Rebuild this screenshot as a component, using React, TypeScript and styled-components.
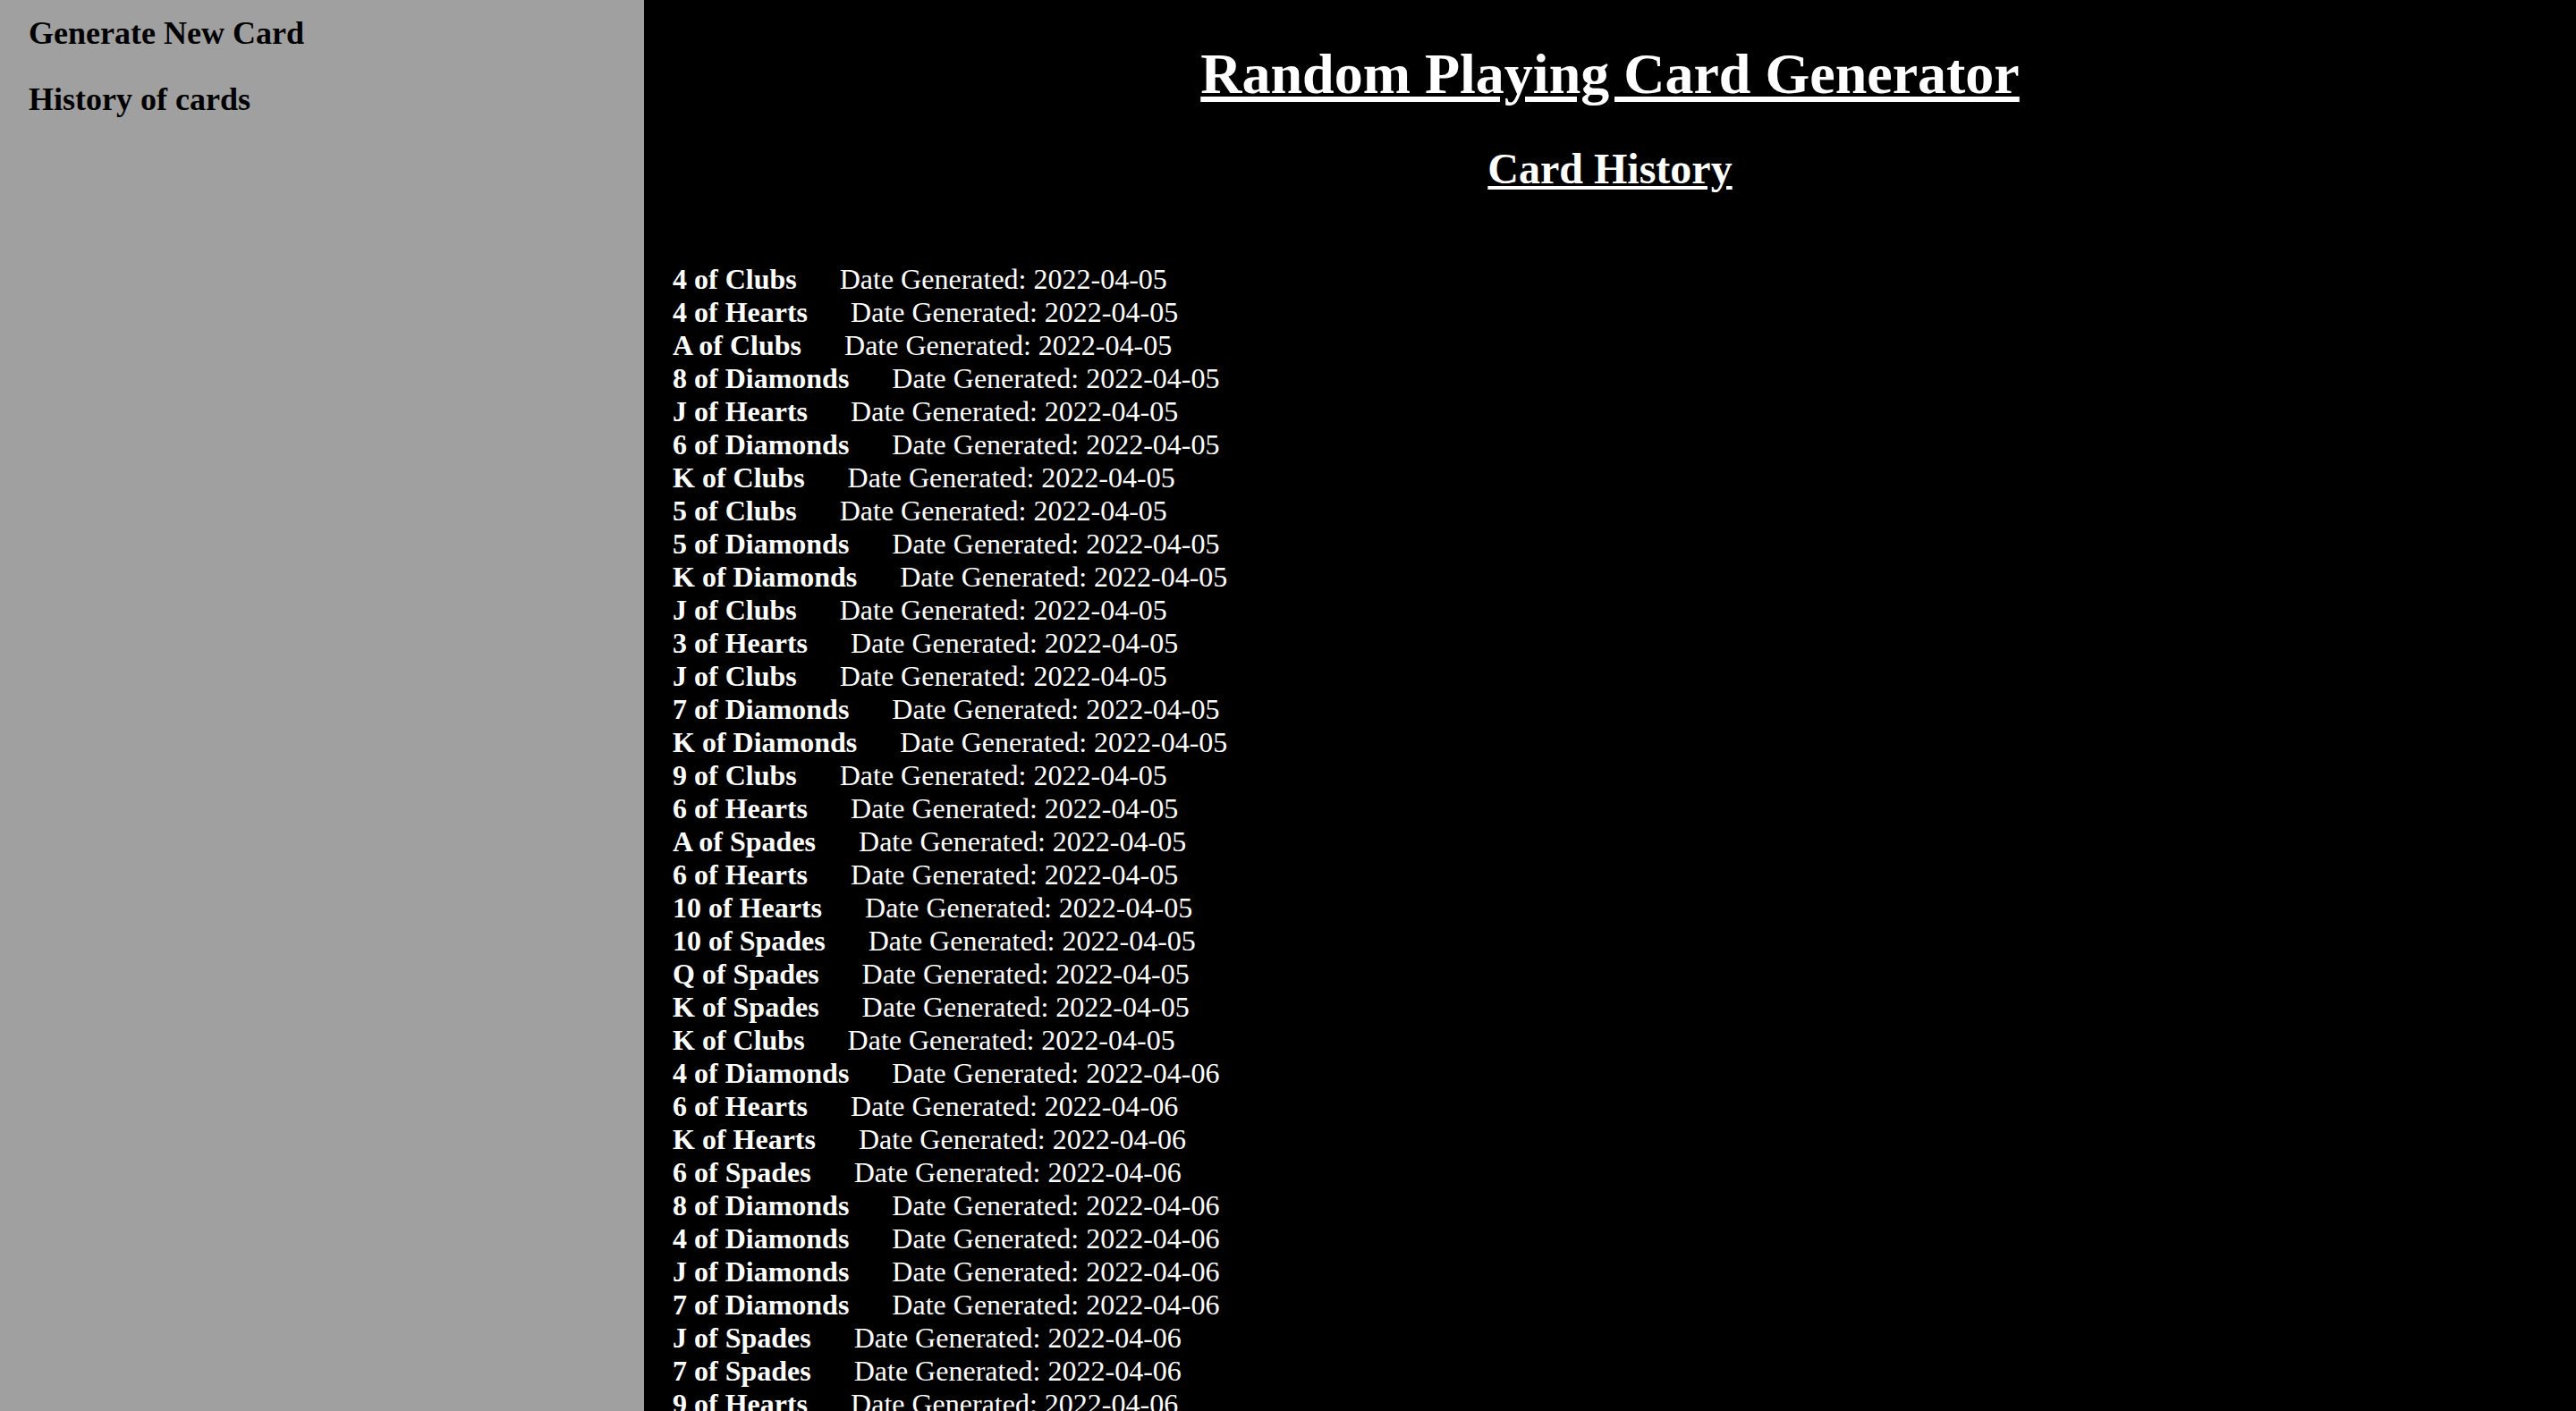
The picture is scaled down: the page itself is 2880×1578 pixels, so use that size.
import React, { FunctionComponent } from 'react';
import styled, { createGlobalStyle } from 'styled-components';

type HistoryEntry = { card: string; date: string };

const history: HistoryEntry[] = [
  { card: '4 of Clubs', date: '2022-04-05' },
  { card: '4 of Hearts', date: '2022-04-05' },
  { card: 'A of Clubs', date: '2022-04-05' },
  { card: '8 of Diamonds', date: '2022-04-05' },
  { card: 'J of Hearts', date: '2022-04-05' },
  { card: '6 of Diamonds', date: '2022-04-05' },
  { card: 'K of Clubs', date: '2022-04-05' },
  { card: '5 of Clubs', date: '2022-04-05' },
  { card: '5 of Diamonds', date: '2022-04-05' },
  { card: 'K of Diamonds', date: '2022-04-05' },
  { card: 'J of Clubs', date: '2022-04-05' },
  { card: '3 of Hearts', date: '2022-04-05' },
  { card: 'J of Clubs', date: '2022-04-05' },
  { card: '7 of Diamonds', date: '2022-04-05' },
  { card: 'K of Diamonds', date: '2022-04-05' },
  { card: '9 of Clubs', date: '2022-04-05' },
  { card: '6 of Hearts', date: '2022-04-05' },
  { card: 'A of Spades', date: '2022-04-05' },
  { card: '6 of Hearts', date: '2022-04-05' },
  { card: '10 of Hearts', date: '2022-04-05' },
  { card: '10 of Spades', date: '2022-04-05' },
  { card: 'Q of Spades', date: '2022-04-05' },
  { card: 'K of Spades', date: '2022-04-05' },
  { card: 'K of Clubs', date: '2022-04-05' },
  { card: '4 of Diamonds', date: '2022-04-06' },
  { card: '6 of Hearts', date: '2022-04-06' },
  { card: 'K of Hearts', date: '2022-04-06' },
  { card: '6 of Spades', date: '2022-04-06' },
  { card: '8 of Diamonds', date: '2022-04-06' },
  { card: '4 of Diamonds', date: '2022-04-06' },
  { card: 'J of Diamonds', date: '2022-04-06' },
  { card: '7 of Diamonds', date: '2022-04-06' },
  { card: 'J of Spades', date: '2022-04-06' },
  { card: '7 of Spades', date: '2022-04-06' },
  { card: '9 of Hearts', date: '2022-04-06' },
  { card: 'Q of Hearts', date: '2022-04-06' },
];

const App: FunctionComponent<{}> = () => {
  return (
    <>
      <GlobalStyle />
      <Layout>
        <Sidebar>
          <NavLink>Generate New Card</NavLink>
          <NavLink>History of cards</NavLink>
        </Sidebar>

        <Main>
          <Title>Random Playing Card Generator</Title>
          <SubTitle>Card History</SubTitle>

          <HistoryList>
            {history.map((entry, i) => (
              <HistoryRow key={i}>
                <CardName>{entry.card}</CardName>
                <DateText>Date Generated: {entry.date}</DateText>
              </HistoryRow>
            ))}
          </HistoryList>
        </Main>
      </Layout>
    </>
  );
};

const GlobalStyle = createGlobalStyle`
  html, body {
    margin: 0;
    padding: 0;
    height: 100%;
    overflow: hidden;
    background: #000;
  }
  body {
    font-family: "Liberation Serif", "Times New Roman", serif;
  }
`;

const Layout = styled.div`
  display: flex;
  min-height: 100vh;
`;

const Sidebar = styled.nav`
  width: 720px;
  flex-shrink: 0;
  background-color: #a0a0a0;
  display: flex;
  flex-direction: column;
  gap: 32px;
  padding: 16px 32px;
  box-sizing: border-box;
`;

const NavLink = styled.div`
  font-size: 36px;
  font-weight: bold;
  line-height: 42px;
  color: #000;
  cursor: pointer;
`;

const Main = styled.main`
  flex: 1;
  background-color: #000;
  color: #fff;
  padding: 0 32px;
`;

const Title = styled.h1`
  margin: 46px 0 0;
  font-size: 64px;
  line-height: 74px;
  text-align: center;
  text-decoration: underline;
`;

const SubTitle = styled.h2`
  margin: 41px 0 0;
  font-size: 48px;
  line-height: 55px;
  text-align: center;
  text-decoration: underline;
`;

const HistoryList = styled.div`
  margin-top: 78px;
  display: flex;
  flex-direction: column;
`;

const HistoryRow = styled.div`
  display: flex;
  font-size: 32px;
  line-height: 37px;
  white-space: nowrap;
`;

const CardName = styled.span`
  font-weight: bold;
`;

const DateText = styled.span`
  margin-left: 48px;
`;

export default App;
